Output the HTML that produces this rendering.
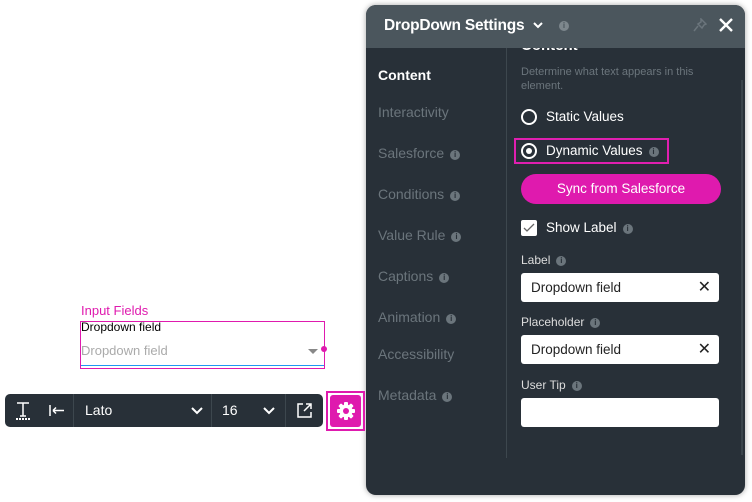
<!DOCTYPE html>
<html><head><meta charset="utf-8"><style>
*{box-sizing:border-box;margin:0;padding:0}
body{width:752px;height:502px;background:#fff;position:relative;overflow:hidden;font-family:"Liberation Sans",sans-serif}
.a{position:absolute}
.panel{left:366px;top:5px;width:379px;height:490px;background:#283038;border-radius:10px;box-shadow:0 0 6px rgba(0,0,0,.35);overflow:hidden}
.hdr{left:0;top:0;width:379px;height:43px;background:#4b565d}
.nav{color:#6b757c;font-size:14px}
.i{display:inline-block;width:10px;height:10px;border-radius:50%;background:#6b757c;color:#283038;font-size:8px;font-weight:bold;text-align:center;line-height:10px;vertical-align:1px;margin-left:6px}
.w{color:#fff;font-size:13.5px}
.inp{background:#fff;border-radius:3px;width:198px;height:29px;color:#222;font-size:13.5px;padding:7px 10px}
.x{position:absolute;right:8px;top:4px;font-size:16px;color:#222}
</style></head><body>
<div class="a panel">
 <div class="a hdr"></div>
 <div class="a" style="left:18px;top:12px;color:#fff;font-weight:bold;font-size:15.5px;letter-spacing:-0.2px">DropDown Settings</div>
 <svg class="a" style="left:166px;top:16px" width="12" height="8" viewBox="0 0 12 8"><path d="M2 2l4 4 4-4" stroke="#fff" stroke-width="2" fill="none"/></svg>
 <span class="a i" style="left:193px;top:16px;margin:0;background:#7d878d;color:#4b565d">i</span>
 <svg class="a" style="left:327px;top:13px" width="14" height="14" viewBox="0 0 14 14"><path d="M8 1l5 5-2 1-2 3-4-4 3-2zM5 8l-4 5" stroke="#6b757c" stroke-width="1.5" fill="none"/></svg>
 <svg class="a" style="left:352px;top:12px" width="16" height="16" viewBox="0 0 16 16"><path d="M2 2l12 12M14 2L2 14" stroke="#fff" stroke-width="2.4"/></svg>
 <div class="a" style="left:140px;top:43px;width:1px;height:410px;background:#3d474e"></div>
 <div class="a" style="left:375px;top:75px;width:2px;height:375px;background:#3a444b"></div>
 <div class="a" style="left:155px;top:32px;color:#fff;font-weight:bold;font-size:15px;clip-path:inset(11px 0 0 0)">Content</div>
 <div class="a w" style="left:12px;top:62px;font-weight:bold;font-size:14px">Content</div>
 <div class="a nav" style="left:12px;top:99px">Interactivity</div>
 <div class="a nav" style="left:12px;top:140px">Salesforce<span class="i">i</span></div>
 <div class="a nav" style="left:12px;top:181px">Conditions<span class="i">i</span></div>
 <div class="a nav" style="left:12px;top:222px">Value Rule<span class="i">i</span></div>
 <div class="a nav" style="left:12px;top:263px">Captions<span class="i">i</span></div>
 <div class="a nav" style="left:12px;top:304px">Animation<span class="i">i</span></div>
 <div class="a nav" style="left:12px;top:341px">Accessibility</div>
 <div class="a nav" style="left:12px;top:382px">Metadata<span class="i">i</span></div>
 <div class="a" style="left:155px;top:60px;color:#6b757c;font-size:11px;line-height:14px;width:200px">Determine what text appears in this element.</div>
 <div class="a" style="left:155px;top:104px;width:16px;height:16px;border:2px solid #fff;border-radius:50%"></div>
 <div class="a w" style="left:180px;top:104px">Static Values</div>
 <div class="a" style="left:148px;top:133px;width:155px;height:26px;border:2px solid #e01fb0"></div>
 <div class="a" style="left:155px;top:138px;width:16px;height:16px;border:2px solid #fff;border-radius:50%"><div style="margin:3px;width:6px;height:6px;border-radius:50%;background:#fff"></div></div>
 <div class="a w" style="left:180px;top:138px">Dynamic Values<span class="i">i</span></div>
 <div class="a" style="left:155px;top:169px;width:200px;height:30px;border-radius:15px;background:#df1aae;color:#fff;font-size:13.5px;text-align:center;line-height:30px">Sync from Salesforce</div>
 <div class="a" style="left:155px;top:215px;width:16px;height:16px;background:#fff;border-radius:2px"><svg width="16" height="16" viewBox="0 0 16 16"><path d="M3 8l3 3 7-7" stroke="#666" stroke-width="1.3" fill="none"/></svg></div>
 <div class="a w" style="left:180px;top:215px">Show Label<span class="i">i</span></div>
 <div class="a" style="left:155px;top:248px;color:#ddd;font-size:12px">Label<span class="i">i</span></div>
 <div class="a inp" style="left:155px;top:268px">Dropdown field<span class="x">&#10005;</span></div>
 <div class="a" style="left:155px;top:310px;color:#ddd;font-size:12px">Placeholder<span class="i">i</span></div>
 <div class="a inp" style="left:155px;top:330px">Dropdown field<span class="x">&#10005;</span></div>
 <div class="a" style="left:155px;top:373px;color:#ddd;font-size:12px">User Tip<span class="i">i</span></div>
 <div class="a inp" style="left:155px;top:393px"></div>
</div>
<div class="a" style="left:81px;top:303px;color:#df1aae;font-size:13px">Input Fields</div>
<div class="a" style="left:80px;top:321px;width:245px;height:48px;border:1px solid #df1aae"></div>
<div class="a" style="left:81px;top:320px;color:#000;font-size:12px">Dropdown field</div>
<div class="a" style="left:81px;top:343px;color:#aaa;font-size:13px">Dropdown field</div>
<div class="a" style="left:308px;top:349px;width:0;height:0;border-left:5px solid transparent;border-right:5px solid transparent;border-top:5px solid #888"></div>
<div class="a" style="left:321px;top:346px;width:6px;height:6px;border-radius:50%;background:#df1aae"></div>
<div class="a" style="left:81px;top:365px;width:243px;height:1px;background:#2196f3"></div>
<div class="a" style="left:5px;top:394px;width:318px;height:33px;background:#283038;border-radius:5px;color:#fff;font-size:14px">
 <svg class="a" style="left:10px;top:7px" width="16" height="20" viewBox="0 0 16 20"><path d="M2 2h12M8 2v13M5 15h6" stroke="#fff" stroke-width="1.5" fill="none"/><path d="M1 18h14" stroke="#fff" stroke-width="2" stroke-dasharray="2 1"/></svg>
 <svg class="a" style="left:44px;top:10px" width="16" height="13" viewBox="0 0 16 13"><path d="M1 1v11M4 6.5h11M4 6.5l3-3M4 6.5l3 3" stroke="#fff" stroke-width="1.5" fill="none"/></svg>
 <div class="a" style="left:68px;top:0;width:1px;height:33px;background:#3d474e"></div>
 <div class="a" style="left:80px;top:8px">Lato</div>
 <svg class="a" style="left:186px;top:13px" width="12" height="8" viewBox="0 0 12 8"><path d="M1 1l5 5 5-5" stroke="#fff" stroke-width="2" fill="none"/></svg>
 <div class="a" style="left:206px;top:0;width:1px;height:33px;background:#3d474e"></div>
 <div class="a" style="left:217px;top:8px">16</div>
 <svg class="a" style="left:258px;top:13px" width="12" height="8" viewBox="0 0 12 8"><path d="M1 1l5 5 5-5" stroke="#fff" stroke-width="2" fill="none"/></svg>
 <div class="a" style="left:280px;top:0;width:1px;height:33px;background:#3d474e"></div>
 <svg class="a" style="left:292px;top:9px" width="15" height="15" viewBox="0 0 15 15"><path d="M6 1H1v13h13V9M9 1h5v5M14 1L7 8" stroke="#fff" stroke-width="1.5" fill="none"/></svg>
</div>
<div class="a" style="left:326px;top:391px;width:39px;height:40px;border:2px solid #df1aae;padding:2px"><div style="width:31px;height:32px;background:#df1aae;border-radius:3px;position:relative">
<svg class="a" style="left:6px;top:6px" width="20" height="20" viewBox="0 0 20 20"><g fill="#fff"><circle cx="10" cy="10" r="6.5"/><rect x="8" y="1" width="4" height="18" rx="1"/><rect x="1" y="8" width="18" height="4" rx="1"/><rect x="8" y="1" width="4" height="18" rx="1" transform="rotate(45 10 10)"/><rect x="8" y="1" width="4" height="18" rx="1" transform="rotate(-45 10 10)"/></g><circle cx="10" cy="10" r="3" fill="#df1aae"/></svg>
</div></div>
</body></html>
